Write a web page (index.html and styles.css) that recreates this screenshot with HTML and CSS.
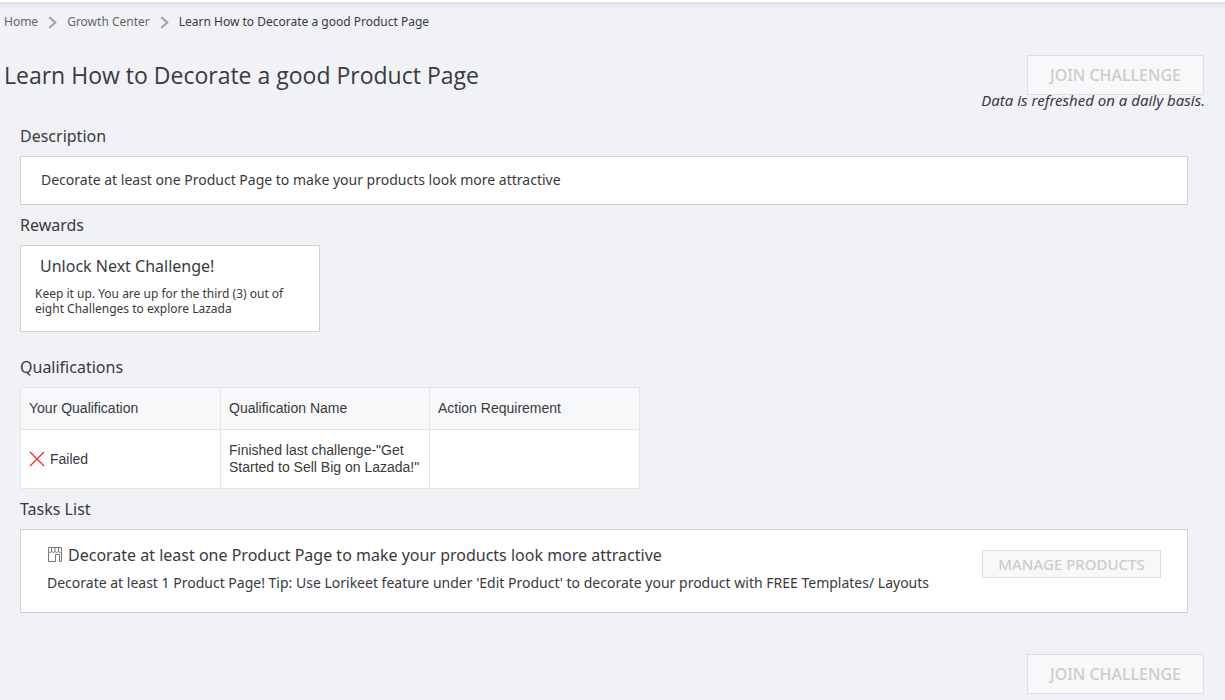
FILE: index.html
```html
<!DOCTYPE html>
<html lang="en">
<head>
<meta charset="utf-8">
<title>Learn How to Decorate a good Product Page</title>
<link rel="stylesheet" href="styles.css">
</head>
<body>
<div class="topbar"></div>
<nav class="breadcrumb" aria-label="Breadcrumb">
  <a href="#">Home</a>
  <svg class="chevron" viewBox="0 0 8 12" aria-hidden="true"><path d="M1 1l5.500 5L1 11"/></svg>
  <a href="#">Growth Center</a>
  <svg class="chevron" viewBox="0 0 8 12" aria-hidden="true"><path d="M1 1l5.500 5L1 11"/></svg>
  <span class="current">Learn How to Decorate a good Product Page</span>
</nav>
<header class="page-head">
  <h1>Learn How to Decorate a good Product Page</h1>
  <div class="head-side">
    <button class="btn btn-large" disabled>JOIN CHALLENGE</button>
    <p class="note">Data is refreshed on a daily basis.</p>
  </div>
</header>
<main class="content">
  <section>
    <h2>Description</h2>
    <div class="card description">Decorate at least one Product Page to make your products look more attractive</div>
  </section>
  <section class="rewards">
    <h2>Rewards</h2>
    <div class="card reward">
      <h3>Unlock Next Challenge!</h3>
      <p>Keep it up. You are up for the third (3) out of eight Challenges to explore Lazada</p>
    </div>
  </section>
  <section>
    <h2>Qualifications</h2>
    <table class="qualifications">
      <thead>
        <tr><th class="status-col">Your Qualification</th><th class="name-col">Qualification Name</th><th>Action Requirement</th></tr>
      </thead>
      <tbody>
        <tr>
          <td><span class="status"><svg class="cross" viewBox="0 0 16 16" aria-hidden="true"><path d="M1 1l14 14M15 1L1 15"/></svg>Failed</span></td>
          <td>Finished last challenge-"Get Started to Sell Big on Lazada!"</td>
          <td></td>
        </tr>
      </tbody>
    </table>
  </section>
  <section>
    <h2>Tasks List</h2>
    <div class="card task">
      <div class="task-text">
        <h3><svg class="shop" viewBox="0 0 16 16" aria-hidden="true"><path d="M1.500 .5h13v4q-1.600 2-3.200 0q-1.600 2-3.300 0q-1.600 2-3.300 0q-1.600 2-3.200 0zM4.500 .5v4M8 .5v4M11.500 .5v4M1.500 5v9.500h7v-7h4v7h2V5"/></svg>Decorate at least one Product Page to make your products look more attractive</h3>
        <p>Decorate at least 1 Product Page! Tip: Use Lorikeet feature under 'Edit Product' to decorate your product with FREE Templates/ Layouts</p>
      </div>
      <button class="btn btn-small" disabled>MANAGE PRODUCTS</button>
    </div>
  </section>
</main>
<footer class="page-foot"><button class="btn btn-large" disabled>JOIN CHALLENGE</button></footer>
</body>
</html>
```
FILE: styles.css
```css
* { box-sizing: border-box; }
body {
  margin: 0;
  background: #f1f2f6;
  color: #3a3a3c;
  font: 14px/20px "Noto Sans", "Open Sans", sans-serif;
}
h1, h2, h3, p { margin: 0; font-weight: 400; }
.topbar {
  height: 10px;
  border-top: 2px solid #fff;
  background: linear-gradient(#dfe0e4, #f1f2f6);
}
.breadcrumb {
  display: flex;
  align-items: center;
  gap: 10px;
  height: 24px;
  padding-left: 4px;
  font-size: 12px;
}
.breadcrumb a { color: #666; text-decoration: none; }
.chevron { width: 9px; height: 13px; fill: none; stroke: #a2a4b0; stroke-width: 2; }
.page-head {
  display: flex;
  justify-content: space-between;
  padding: 21px 21px 0 4px;
}
.page-head h1 { font-family: "Open Sans", sans-serif; font-size: 23px; line-height: 40px; }
.head-side { display: flex; flex-direction: column; align-items: flex-end; }
.note { height: 21px; margin-right: -1px; font-size: 15px; line-height: 10px; font-style: italic; white-space: nowrap; }
.btn {
  position: relative;
  flex: none;
  padding: 0;
  border: 1px solid #dcdee3;
  background: #f7f8fa;
  color: #ccc;
  font-family: inherit;
  font-weight: 500;
}
.btn-large { width: 177px; height: 40px; font-size: 16px; }
.btn-small { width: 179px; height: 28px; font-size: 15px; line-height: 24px; }
.content { padding: 0 37px 0 20px; }
h2 { font-size: 16px; line-height: 40px; }
.card { border: 1px solid #d0d2d4; background: #fff; }
.description { padding: 13px 20px 14px; }
.rewards { margin-bottom: 15px; }
.reward { width: 300px; padding: 8px 14px 15px; }
.reward h3 { padding: 0 5px 8px; font-size: 16px; line-height: 24px; }
.reward p { font-size: 12px; line-height: 15px; }
.qualifications {
  width: 620px;
  border-collapse: collapse;
  table-layout: fixed;
  background: #fff;
  font: 14px/17px "Liberation Sans", Arial, sans-serif;
}
.qualifications th, .qualifications td {
  padding: 12px 8px;
  border: 1px solid #e4e6ea;
  text-align: left;
  font-weight: 400;
}
.qualifications th { background: #f7f8fa; }
.qualifications .status-col { width: 200px; }
.qualifications .name-col { width: 209px; }
.status { display: flex; align-items: center; gap: 5px; }
.cross { width: 16px; height: 16px; fill: none; stroke: #f02828; stroke-width: 1.200; }
.task {
  display: flex;
  align-items: flex-start;
  justify-content: space-between;
  padding: 13px 26px 19px;
}
.task h3 { display: flex; align-items: center; gap: 5px; padding-bottom: 6px; font-size: 16px; line-height: 24px; }
.task .btn { margin-top: 7px; }
.shop { width: 16px; height: 16px; fill: none; stroke: #777; stroke-width: 1; }
.page-foot { display: flex; justify-content: flex-end; padding: 41px 21px 6px; }
```
